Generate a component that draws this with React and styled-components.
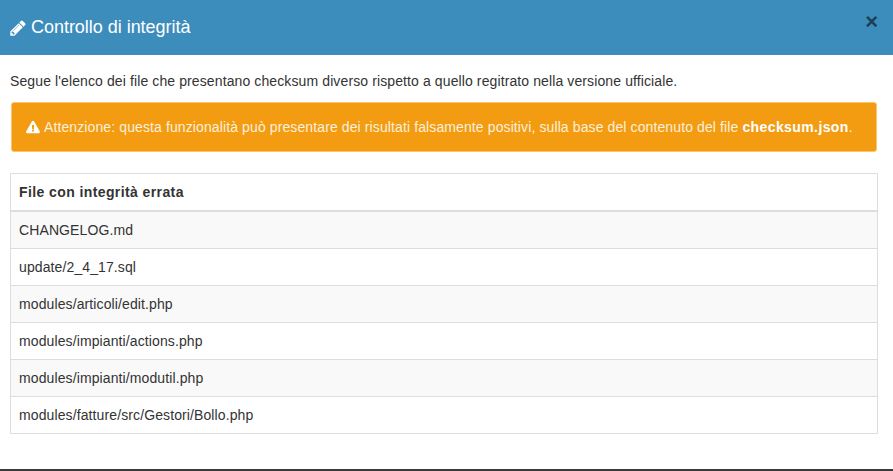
import React from "react";
import styled, { createGlobalStyle } from "styled-components";
import { FaExclamationTriangle } from "react-icons/fa";

const GlobalStyle = createGlobalStyle`
  html, body {
    margin: 0;
    padding: 0;
    height: 100%;
    background: #fff;
    overflow: hidden;
  }
  body {
    font-family: "Liberation Sans", Arial, sans-serif;
    font-size: 14px;
    line-height: 20px;
    letter-spacing: 0.11px;
    color: #333;
  }
`;

const Modal = styled.div`
  height: 469px;
  border-bottom: 2px solid #3a3a3a;
  background: #fff;
`;

const Header = styled.header`
  display: flex;
  align-items: center;
  justify-content: space-between;
  height: 55px;
  padding: 0 15px 0 9px;
  box-sizing: border-box;
  background: #3c8dbc;
  color: #fff;
`;

const Title = styled.h4`
  display: flex;
  align-items: center;
  gap: 4px;
  margin: 0;
  font-size: 18px;
  font-weight: 400;
  line-height: 25px;
  letter-spacing: -0.03px;
`;

const Close = styled.button`
  padding: 0;
  margin-top: -11px;
  border: none;
  background: none;
  color: #000;
  opacity: 0.55;
  font-family: inherit;
  font-size: 22px;
  font-weight: 700;
  line-height: 1;
`;

const Body = styled.div`
  padding: 16px 15px 0 10px;
`;

const Intro = styled.p`
  margin: 0 0 11px;
`;

const Alert = styled.div`
  display: flex;
  align-items: center;
  gap: 4px;
  height: 50px;
  margin: 0 1px 21px;
  padding-left: 14px;
  box-sizing: border-box;
  border: 1px solid #f9c46e;
  border-radius: 3px;
  background: #f39c12;
  color: #fff;
`;

const AlertText = styled.span`
  color: #fdf0dc;
  b {
    color: #fff;
    letter-spacing: 0.4px;
  }
`;

const Table = styled.table`
  width: 100%;
  border-collapse: collapse;
  color: #333;
`;

const HeadCell = styled.th`
  height: 36px;
  padding: 0 8px;
  border: 1px solid #ddd;
  border-bottom-width: 2px;
  text-align: left;
  font-weight: 700;
  letter-spacing: 0.4px;
`;

const Row = styled.tr`
  background: ${(p) => (p.$odd ? "#f9f9f9" : "#fff")};
`;

const Cell = styled.td`
  height: 36px;
  padding: 0 8px;
  border: 1px solid #ddd;
`;

const PencilIcon = () => (
  <svg width="18" height="18" viewBox="0 0 1792 1792" fill="currentColor" aria-hidden="true">
    <path d="M491 1536l91-91-235-235-91 91v107h128v128h107zm523-928q0-22-22-22-10 0-17 7l-542 542q-7 7-7 17 0 22 22 22 10 0 17-7l542-542q7-7 7-17zm-54-192l416 416-832 832h-416v-416zm683 96q0 53-37 90l-166 166-416-416 166-165q36-38 90-38 53 0 91 38l235 234q37 39 37 91z" />
  </svg>
);

const files = [
  "CHANGELOG.md",
  "update/2_4_17.sql",
  "modules/articoli/edit.php",
  "modules/impianti/actions.php",
  "modules/impianti/modutil.php",
  "modules/fatture/src/Gestori/Bollo.php",
];

export default function App() {
  return (
    <>
      <GlobalStyle />
      <Modal>
        <Header>
          <Title>
            <PencilIcon />
            Controllo di integrità
          </Title>
          <Close>×</Close>
        </Header>
        <Body>
          <Intro>
            Segue l'elenco dei file che presentano checksum diverso rispetto a quello regitrato nella versione ufficiale.
          </Intro>
          <Alert>
            <FaExclamationTriangle size={14} />
            <AlertText>
              Attenzione: questa funzionalità può presentare dei risultati falsamente positivi, sulla base del contenuto del file <b>checksum.json</b>.
            </AlertText>
          </Alert>
          <Table>
            <thead>
              <tr>
                <HeadCell>File con integrità errata</HeadCell>
              </tr>
            </thead>
            <tbody>
              {files.map((file, i) => (
                <Row key={file} $odd={i % 2 === 0}>
                  <Cell>{file}</Cell>
                </Row>
              ))}
            </tbody>
          </Table>
        </Body>
      </Modal>
    </>
  );
}
